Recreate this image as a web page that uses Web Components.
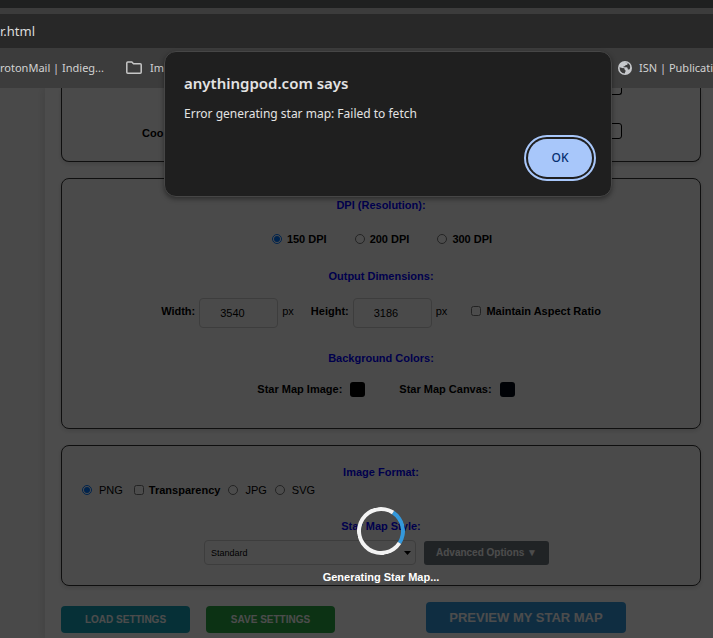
<!DOCTYPE html>
<html lang="en">
<head>
<meta charset="utf-8">
<title>Star Map Generator</title>
<style>
  body { margin: 0; height: 100vh; overflow: hidden; display: flex; flex-direction: column;
    background: #f5f5f5; font: 11px/16px "Liberation Sans", Arial, sans-serif; color: #000; }
  star-page { flex: 1; min-height: 0; }
</style>
</head>
<body>
<browser-bar></browser-bar>
<star-page></star-page>
<alert-dialog>
  <span slot="title">anythingpod.com says</span>
  <span slot="message">Error generating star map: Failed to fetch</span>
</alert-dialog>

<script>
const define = (name, html) => {
  const template = document.createElement('template');
  template.innerHTML = html;
  customElements.define(name, class extends HTMLElement {
    constructor() {
      super();
      this.attachShadow({ mode: 'open' }).append(template.content.cloneNode(true));
    }
  });
};

define('browser-bar', `
<style>
  :host { display: block; background: #3c3c3c; color: #d2d2d2; font: 11px/16px "Noto Sans", "Open Sans", sans-serif; }
  .tabs { height: 8px; background: #1f2020; }
  .url { margin-top: 6px; height: 34px; line-height: 34px; background: #282828; font-size: 13px; color: #dcdcdc; }
  nav { height: 40px; display: flex; align-items: center; gap: 22px; white-space: nowrap; overflow: hidden; }
  a { display: flex; align-items: center; gap: 8px; color: inherit; text-decoration: none; flex: none; }
  .last { margin-left: auto; width: 95px; gap: 7px; }
  svg { flex: none; }
</style>
<div class="tabs"></div>
<div class="url">r.html</div>
<nav>
  <a href="#mail">rotonMail | Indieg...</a>
  <a href="#folder"><svg width="16" height="14" viewBox="0 0 16 14" fill="none" stroke="#c7c7c7" stroke-width="1.5"><path d="M.8 2q0-1 1-1h4l1.700 1.800h6.700q1 0 1 1v7.400q0 1-1 1H1.800q-1 0-1-1z"/></svg>Im</a>
  <a class="last" href="#isn"><svg width="14" height="14" viewBox="0 0 14 14"><circle cx="7" cy="7" r="7" fill="#c7c9cc"/><path fill="#3c3c3c" d="M1.500 6.300 4.200 7q.9.300 1.600 0 .9.200.8 1.200t.9 1.100q.4 1-.3 1.700l-.5 1.600Q1.600 12 1.500 6.300zM7 1.500l2.500.6v1.100q0 .8-.9.800H7.500l-.3 1.200H5.600v1H8.500q1 .1 1.100 1.100l.3 1.100h1.400l.6-.7q1-3.400-1.500-5.300Q8.900 1.300 7 1.500z"/></svg>ISN | Publicati</a>
</nav>`);

define('alert-dialog', `
<style>
  :host { position: absolute; left: 164px; top: 51px; width: 448px; box-sizing: border-box; display: flex; flex-direction: column;
    background: #1f1f1f; border: 1px solid #464646; border-radius: 12px; padding: 19px 19px;
    box-shadow: 0 2px 5px #0006; color: #e3e3e3; font: 12px/18px "Noto Sans", "Open Sans", sans-serif; }
  h1 { margin: 0; font-size: 15px; line-height: 24px; font-weight: 600; }
  p { margin: 10px 0 16px; }
  button { align-self: flex-end; width: 64px; height: 38px; border: 0; border-radius: 19px; background: #a8c7fa; color: #062e6f;
    outline: 2px solid #a8c7fa; outline-offset: 2px; font: 500 12px/18px "Noto Sans", "Open Sans", sans-serif; }
</style>
<h1><slot name="title"></slot></h1>
<p><slot name="message"></slot></p>
<button type="button">OK</button>`);

define('settings-panel', `
<style>
  :host { display: flex; flex-direction: column; box-sizing: border-box; background: #f9f9f9; border: 1px solid #333;
    border-radius: 8px; padding: 18px 20px; box-shadow: 0 2px 5px #0002; }
</style>
<slot></slot>`);

define('action-button', `
<style>
  :host { display: block; }
  button { display: block; width: 100%; height: 27px; border: 0; border-radius: 4px; padding: 0; color: #fff;
    background: var(--fill); font: bold 10px/16px "Liberation Sans", Arial, sans-serif; }
  :host(.main) button { height: 31px; font-size: 13px; }
  :host(.small) button { height: 24px; border-radius: 3px; }
</style>
<button type="button"><slot></slot></button>`);

define('busy-overlay', `
<style>
  :host { display: flex; flex-direction: column; align-items: center; box-sizing: border-box; gap: 14px;
    padding: 419px 0 0 49px; background: rgba(0,0,0,.7); color: #fff; font-weight: bold; }
  i { box-sizing: border-box; width: 48px; height: 48px; border: 4px solid #f3f3f3; border-top-color: #3498db;
    border-radius: 50%; transform: rotate(78deg); }
</style>
<i></i><span role="status"><slot></slot></span>`);

define('star-page', `
<style>
  :host { display: grid; grid-template: minmax(0,1fr) / minmax(0,1fr); overflow: hidden; }
  main, busy-overlay { grid-area: 1 / 1; }
  main { margin-left: 45px; padding: 0 12px 0 16px; background: #fff; box-shadow: 0 0 10px #0002; }
  settings-panel { margin-bottom: 16px; }
  .above { border-top: 0; border-radius: 0 0 8px 8px; padding: 0 78px 22px 80px; }
  .above input { box-sizing: border-box; height: 16px; width: 200px; border: 1px solid #000; border-radius: 3px; background: #fff; }
  .above .cut { align-self: flex-end; height: 7px; border-top: 0; border-radius: 0 0 3px 3px; margin-bottom: 28px; }
  .above .row { justify-content: space-between; height: 16px; }
  .above label { padding-top: 3px; }
  .dims { padding-bottom: 31px; }
  .format { padding-bottom: 20px; }
  h2 { margin: 0; font-size: 11px; line-height: 16px; text-align: center; color: #00f; }
  .row { display: flex; align-items: center; justify-content: center; }
  label { font-weight: bold; white-space: nowrap; }
  .plain { font-weight: normal; }
  input[type=radio], input[type=checkbox] { width: 10px; height: 10px; margin: 0; flex: none; }
  .pick { display: flex; align-items: center; gap: 5px; }
  .dpi { gap: 28px; margin: 18px 0 21px; padding-left: 2px; }
  .row.size { gap: 4px; margin: 14px 0 22px; align-items: flex-start; line-height: 26px; }
  .size input[type=text] { box-sizing: border-box; width: 79px; height: 30px; padding: 0 20px; border: 1px solid #ccc;
    border-radius: 4px; background: #f9f9f9; font: inherit; color: #000; }
  .height { margin-left: 13px; }
  .ratio { margin-left: 20px; }
  .colors { gap: 34px; margin-top: 15px; padding-left: 10px; }
  .colors .pick { gap: 8px; }
  input[type=color] { appearance: none; width: 15px; height: 15px; padding: 0; border: 0; border-radius: 3px; background: #000; overflow: hidden; }
  input::-webkit-color-swatch-wrapper { padding: 0; }
  input::-webkit-color-swatch { border: 0; }
  .types { justify-content: flex-start; height: 20px; gap: 8px; margin-bottom: 18px; }
  .types .pick { gap: 7px; }
  .types .alpha { gap: 5px; margin-left: 3px; }
  .style { gap: 8px; margin-top: 6px; padding-right: 9px; }
  .choose { display: grid; align-items: center; width: 212px; }
  .choose > * { grid-area: 1 / 1; }
  select { appearance: none; width: 100%; height: 25px; padding: 0 6px; border: 1px solid #ccc; border-radius: 4px;
    background: #f9f9f9; color: #000; font: 9px/16px "Liberation Sans", Arial, sans-serif; }
  .choose svg { justify-self: end; margin-right: 5px; pointer-events: none; }
  .style action-button { width: 125px; }
  .actions { align-items: flex-end; justify-content: flex-start; gap: 16px; }
  .actions > action-button { width: 129px; }
  .preview { flex: 1; display: flex; justify-content: center; }
  .preview action-button { width: 200px; }
</style>
<main>
  <settings-panel class="above">
    <input class="cut" type="text" aria-label="Location">
    <div class="row"><label for="coo">Coo</label><input id="coo" type="text"></div>
  </settings-panel>
  <settings-panel class="dims">
    <h2>DPI (Resolution):</h2>
    <div class="row dpi">
      <label class="pick"><input type="radio" name="dpi" checked>150 DPI</label>
      <label class="pick"><input type="radio" name="dpi">200 DPI</label>
      <label class="pick"><input type="radio" name="dpi">300 DPI</label>
    </div>
    <h2>Output Dimensions:</h2>
    <div class="row size">
      <label for="w">Width:</label><input id="w" type="text" value="3540"><span>px</span>
      <label class="height" for="h">Height:</label><input id="h" type="text" value="3186"><span>px</span>
      <label class="pick ratio"><input type="checkbox">Maintain Aspect Ratio</label>
    </div>
    <h2>Background Colors:</h2>
    <div class="row colors">
      <label class="pick">Star Map Image:<input type="color" value="#000000"></label>
      <label class="pick">Star Map Canvas:<input type="color" value="#000814"></label>
    </div>
  </settings-panel>
  <settings-panel class="format">
    <h2>Image Format:</h2>
    <div class="row types">
      <label class="pick plain"><input type="radio" name="type" checked>PNG</label>
      <label class="pick alpha"><input type="checkbox">Transparency</label>
      <label class="pick plain"><input type="radio" name="type">JPG</label>
      <label class="pick plain"><input type="radio" name="type">SVG</label>
    </div>
    <h2>Star Map Style:</h2>
    <div class="row style">
      <div class="choose">
        <select aria-label="Star Map Style"><option>Standard</option></select>
        <svg width="7" height="4" viewBox="0 0 7 4"><path d="M0 0h7L3.500 4z"/></svg>
      </div>
      <action-button class="small" style="--fill:#6c757d">Advanced Options ▼</action-button>
    </div>
  </settings-panel>
  <div class="row actions">
    <action-button style="--fill:#17a2b8">LOAD SETTINGS</action-button>
    <action-button style="--fill:#28a745">SAVE SETTINGS</action-button>
    <div class="preview"><action-button class="main" style="--fill:#3498db">PREVIEW MY STAR MAP</action-button></div>
  </div>
</main>
<busy-overlay>Generating Star Map...</busy-overlay>`);
</script>
</body>
</html>
